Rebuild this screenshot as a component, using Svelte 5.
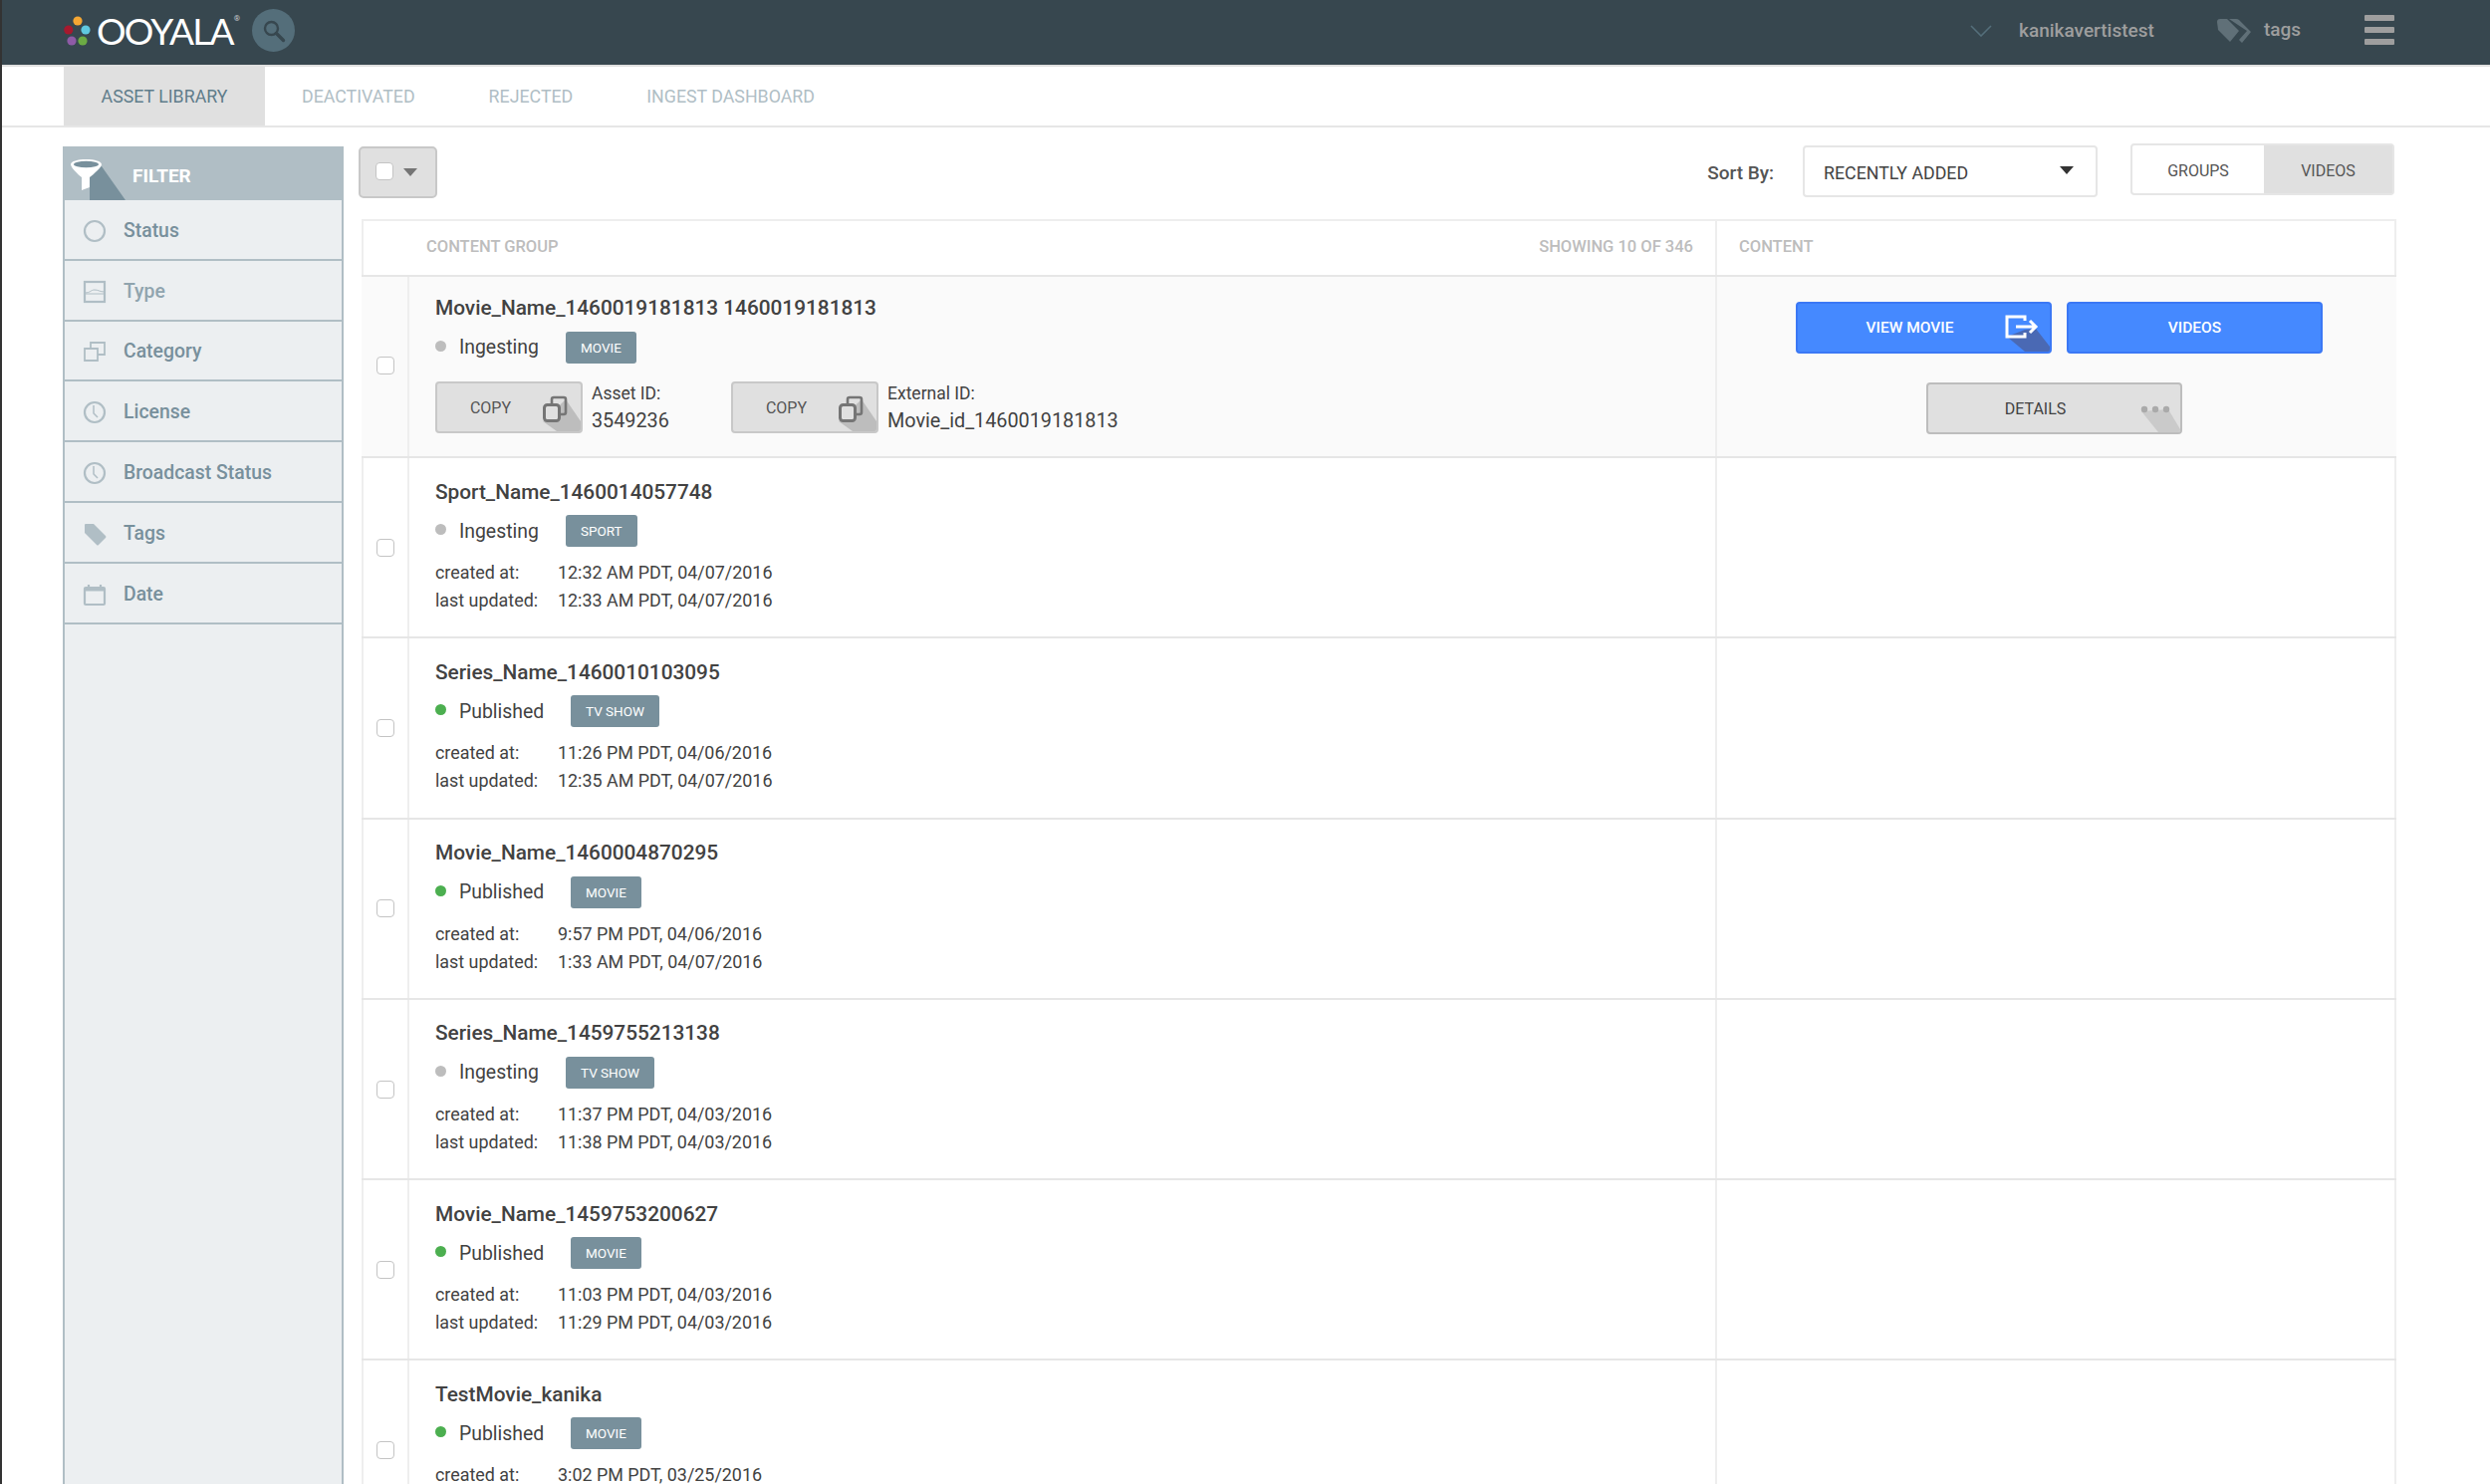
<script>
  const filters = [
    { label: 'Status', icon: 'status' },
    { label: 'Type', icon: 'type' },
    { label: 'Category', icon: 'category' },
    { label: 'License', icon: 'clock' },
    { label: 'Broadcast Status', icon: 'clock' },
    { label: 'Tags', icon: 'tag' },
    { label: 'Date', icon: 'date' }
  ];
  const rows = [
    { name: 'Sport_Name_1460014057748', status: 'Ingesting', type: 'SPORT', created: '12:32 AM PDT, 04/07/2016', updated: '12:33 AM PDT, 04/07/2016' },
    { name: 'Series_Name_1460010103095', status: 'Published', type: 'TV SHOW', created: '11:26 PM PDT, 04/06/2016', updated: '12:35 AM PDT, 04/07/2016' },
    { name: 'Movie_Name_1460004870295', status: 'Published', type: 'MOVIE', created: '9:57 PM PDT, 04/06/2016', updated: '1:33 AM PDT, 04/07/2016' },
    { name: 'Series_Name_1459755213138', status: 'Ingesting', type: 'TV SHOW', created: '11:37 PM PDT, 04/03/2016', updated: '11:38 PM PDT, 04/03/2016' },
    { name: 'Movie_Name_1459753200627', status: 'Published', type: 'MOVIE', created: '11:03 PM PDT, 04/03/2016', updated: '11:29 PM PDT, 04/03/2016' },
    { name: 'TestMovie_kanika', status: 'Published', type: 'MOVIE', created: '3:02 PM PDT, 03/25/2016', updated: '' }
  ];
  const tabs = ['DEACTIVATED', 'REJECTED', 'INGEST DASHBOARD'];
</script>

{#snippet copyBtn()}
  <button class="copy"><span>COPY</span>
    <svg class="ls" width="60" height="52" viewBox="0 0 60 52">
      <path d="M45 20L60 42V52H36L22 42z" fill="#bdbdbd" />
      <rect x="23.500" y="25.500" width="15" height="16" rx="3" fill="#e0e0e0" stroke="#757575" stroke-width="3" />
      <path d="M31 24v-4q0-2 2-2h10q2 0 2 2v13q0 2-2 2h-4" fill="none" stroke="#757575" stroke-width="2.600" />
    </svg>
  </button>
{/snippet}

<div class="page">
  <header class="top">
    <div class="logo">
      <svg class="dots" width="30" height="32" viewBox="0 0 30 32">
        <circle cx="14" cy="6" r="4.600" fill="#f5a733" />
        <circle cx="4.800" cy="15" r="4.600" fill="#a6192e" />
        <circle cx="22" cy="15" r="4.600" fill="#5fc8e0" />
        <circle cx="8" cy="26" r="4.600" fill="#8e5ba6" />
        <circle cx="19" cy="26" r="4.600" fill="#6cab44" />
      </svg>
      <span class="brand">OOYALA</span>
      <sup class="reg">®</sup>
    </div>
    <div class="search">
      <svg width="26" height="26" viewBox="0 0 26 26" fill="none" stroke="#37474f" stroke-width="2.400">
        <circle cx="10.500" cy="10.500" r="6.500" />
        <path d="M15.500 15.500l7 7" stroke-width="3.400" stroke-linecap="round" />
      </svg>
    </div>
    <div class="spacer"></div>
    <svg class="chev" width="22" height="12" viewBox="0 0 22 12" fill="none" stroke="#546e7a" stroke-width="1.600"><path d="M1 1l10 10L21 1" /></svg>
    <span class="user">kanikavertistest</span>
    <svg class="tags" width="36" height="26" viewBox="0 0 36 26" fill="#607078">
      <path d="M1 4Q1 1 4 1h7l12 12-9 11L2 12z" />
      <path d="M13 1h7q2 0 3 1l12 12-9 11-3-3 8-9z" />
    </svg>
    <span class="taglabel">tags</span>
    <div class="burger"><i></i><i></i><i></i></div>
  </header>

  <nav class="tabs">
    <div class="tab active">ASSET LIBRARY</div>
    {#each tabs as t}
      <div class="tab">{t}</div>
    {/each}
  </nav>

  <div class="body">
    <aside class="side">
      <div class="side-head">
        <svg class="funnel" width="66" height="54" viewBox="0 0 66 54">
          <path d="M39 20L63 54H27V40L20 30z" fill="#78909c" />
          <path d="M8 18c0-3 7-5 15.500-5S39 15 39 18c0 3-8 10-12 13v10l-8 3V31C15 28 8 21 8 18z" fill="#fff" />
          <ellipse cx="23.500" cy="18" rx="12.500" ry="3.200" fill="#78909c" />
        </svg>
        <span>FILTER</span>
      </div>
      {#each filters as f}
        <div class="side-row" class:light={f.label === 'Type'}>
          <svg width="24" height="24" viewBox="0 0 24 24" fill="none" stroke="#b0bec5" stroke-width="2.200">
            {#if f.icon === 'status'}
              <circle cx="12" cy="12" r="10" />
            {:else if f.icon === 'type'}
              <rect x="2" y="2" width="20" height="20" />
              <path d="M2 13c6 0 6-3 10-3s5 2 10 2M2 14h20" stroke-width="1" />
            {:else if f.icon === 'category'}
              <path d="M2 9h13v12H2zM8 9V3h14v12h-7" stroke-width="1.800" />
            {:else if f.icon === 'clock'}
              <circle cx="12" cy="12" r="10" />
              <path d="M11 5v8l4 4" stroke-width="1.500" />
            {:else if f.icon === 'tag'}
              <path d="M2 3q0-1 1-1h8l12 12q1 1 0 2l-7 7q-1 1-2 0L2 11z" fill="#b0bec5" stroke="none" />
            {:else}
              <rect x="2" y="5" width="20" height="17" rx="1" />
              <path d="M2 7h20" stroke-width="3" />
              <path d="M6 2v3M18 2v3" />
            {/if}
          </svg>
          <span>{f.label}</span>
        </div>
      {/each}
    </aside>

    <main class="main">
      <div class="toolbar">
        <div class="selall"><span class="cb inner"></span><span class="tri small"></span></div>
        <div class="spacer"></div>
        <span class="sortlabel">Sort By:</span>
        <div class="sortsel"><span>RECENTLY ADDED</span><span class="tri dark"></span></div>
        <div class="seg"><div class="segitem">GROUPS</div><div class="segitem on">VIDEOS</div></div>
      </div>

      <section class="table">
        <div class="thead">
          <div class="th-a"><span>CONTENT GROUP</span><span>SHOWING 10 OF 346</span></div>
          <div class="th-b">CONTENT</div>
        </div>

        <div class="row first">
          <div class="c-check"><span class="cb"></span></div>
          <div class="c-main">
            <div class="title">Movie_Name_1460019181813 1460019181813</div>
            <div class="statusline"><i class="dot ingest"></i><span class="st narrow">Ingesting</span><span class="badge">MOVIE</span></div>
            <div class="ids">
              {@render copyBtn()}
              <div class="idtext w1"><div class="idl">Asset ID:</div><div class="idv">3549236</div></div>
              {@render copyBtn()}
              <div class="idtext"><div class="idl">External ID:</div><div class="idv">Movie_id_1460019181813</div></div>
            </div>
          </div>
          <div class="c-content">
            <div class="btnrow">
              <button class="act blue"><span>VIEW MOVIE</span>
                <svg class="ls" width="70" height="52" viewBox="0 0 70 52">
                  <path d="M27 37L45 52H70V47L56 29 45 30z" fill="#4a69b4" />
                  <path d="M45 21V17H27V37H45V33" fill="none" stroke="#fff" stroke-width="3" />
                  <path d="M36 27H56M50 21l6 6-6 6" fill="none" stroke="#fff" stroke-width="3" />
                </svg>
              </button>
              <button class="act blue plain">VIDEOS</button>
            </div>
            <button class="act detail"><span>DETAILS</span>
              <svg class="ls" width="60" height="52" viewBox="0 0 60 52">
                <path d="M21 31L38 52H60V49L48 29z" fill="#cacaca" />
                <circle cx="24" cy="29" r="3.200" fill="#aaa" />
                <circle cx="35" cy="29" r="3.200" fill="#aaa" />
                <circle cx="46" cy="29" r="3.200" fill="#aaa" />
              </svg>
            </button>
          </div>
        </div>

        {#each rows as r}
          <div class="row">
            <div class="c-check"><span class="cb"></span></div>
            <div class="c-main">
              <div class="title">{r.name}</div>
              <div class="statusline">
                <i class="dot" class:ingest={r.status === 'Ingesting'} class:pub={r.status === 'Published'}></i>
                <span class="st" class:narrow={r.status === 'Ingesting'}>{r.status}</span>
                <span class="badge">{r.type}</span>
              </div>
              <div class="meta"><span>created at:</span><span>{r.created}</span></div>
              {#if r.updated}
                <div class="meta"><span>last updated:</span><span>{r.updated}</span></div>
              {/if}
            </div>
            <div class="c-content"></div>
          </div>
        {/each}
      </section>
    </main>
  </div>
</div>

<style>
  :global(body) { margin: 0; background: #fff; }
  .page {
    width: 2500px; height: 1490px; overflow: hidden; position: relative;
    font-family: Roboto, "Liberation Sans", sans-serif; color: #424242;
    display: flex; flex-direction: column; box-sizing: border-box; border-left: 2px solid #333;
  }
  .top {
    height: 61px; padding-bottom: 4px; flex: none; background: #37474f; display: flex; align-items: center;
    border-bottom: 2px solid #e0e0e0; box-sizing: content-box;
  }
  .logo { display: flex; align-items: center; margin-left: 62px; width: 183px; height: 61px; }
  .dots { flex: none; }
  .brand { font-family: Lato, Roboto, sans-serif; color: #fff; font-size: 37px; font-weight: 400; letter-spacing: -1.800px; margin-left: 3px; }
  .reg { color: #ccc; font-size: 8px; align-self: flex-start; margin: 14px 0 0 1px; }
  .search { width: 43px; height: 43px; border-radius: 50%; background: #546e7a; display: flex; align-items: center; justify-content: center; margin-left: 6px; }
  .spacer { flex: 1; }
  .chev { margin-right: 27px; }
  .user { color: #9e9e9e; font-size: 19px; font-weight: 500; width: 198px; }
  .tags { margin-right: 12px; }
  .taglabel { color: #9e9e9e; font-size: 19px; font-weight: 500; width: 101px; margin-top: -2px; }
  .burger { display: flex; flex-direction: column; gap: 6px; width: 30px; margin-right: 96px; margin-top: -2px; }
  .burger i { height: 6px; background: #9e9e9e; border-radius: 1px; display: block; }

  .tabs { height: 59px; flex: none; display: flex; padding-left: 62px; border-bottom: 2px solid #e6e6e6; }
  .tab { color: #b0bec5; font-size: 17.800px; font-weight: 400; display: flex; align-items: center; margin-right: 74px; }
  .tab.active { background: #e0e0e0; color: #607d8b; width: 202px; justify-content: center; margin-right: 37px; }

  .body { flex: 1; display: flex; align-items: stretch; padding: 19px 0 0 61px; min-height: 0; }
  .side { width: 282px; flex: none; box-sizing: border-box; background: #eceff1; border: solid #b0bec5; border-width: 0 2px; }
  .side-head { height: 54px; margin: 0 -2px; background: #b0bec5; color: #fff; font-weight: 700; font-size: 19px; display: flex; align-items: center; position: relative; overflow: hidden; }
  .side-head span { margin-left: 70px; margin-top: 5px; }
  .funnel { position: absolute; left: 0; top: 0; }
  .side-row { height: 60.800px; box-sizing: border-box; border-bottom: 2px solid #b0bec5; display: flex; align-items: center; padding-left: 18px; gap: 17px; color: #78909c; font-size: 19.400px; font-weight: 500; }
  .side-row span { margin-top: 2px; }
  .side-row svg { margin-top: 3px; }
  .side-row.light { color: #90a4ae; }

  .main { flex: 1; min-width: 0; padding-left: 15px; padding-right: 95px; }
  .toolbar { height: 54px; display: flex; align-items: flex-start; margin-right: 1px; }
  .selall { width: 79px; height: 52px; box-sizing: border-box; background: #e0e0e0; border: 2px solid #c8c8c8; border-radius: 5px; display: flex; align-items: center; padding-left: 15px; gap: 10px; }
  .cb { display: block; width: 18px; height: 18px; box-sizing: border-box; border: 1.500px solid #c4c4c4; border-radius: 4px; background: #fff; }
  .cb.inner { margin-bottom: 2px; }
  .first .cb { margin-bottom: 3px; }
  .tri { display: block; width: 0; height: 0; border-left: 7px solid transparent; border-right: 7px solid transparent; border-top: 8px solid #757575; }
  .tri.small { margin-bottom: 1px; }
  .tri.dark { border-top-color: #333; margin-bottom: 4px; }
  .sortlabel { font-size: 19px; font-weight: 500; color: #555; margin-top: 15px; margin-right: 29px; }
  .sortsel { width: 296px; height: 52px; box-sizing: border-box; border: 2px solid #e6e6e6; border-radius: 4px; display: flex; align-items: center; justify-content: space-between; padding: 2px 22px 0 19px; font-size: 17.800px; color: #424242; margin-right: 33px; margin-top: -1px; }
  .seg { display: flex; width: 265px; height: 52px; box-sizing: border-box; border: 2px solid #e6e6e6; border-radius: 4px; font-size: 16px; color: #555; margin-top: -3px; }
  .segitem { display: flex; align-items: center; justify-content: center; width: 134px; padding-top: 2px; }
  .segitem.on { background: #e0e0e0; width: 131px; }

  .table { margin: 19px 0 0 3px; width: 2043px; box-sizing: border-box; border: solid #eee; border-width: 2px 2px 0; }
  .thead { height: 56px; box-sizing: border-box; display: flex; border-bottom: 2px solid #e6e6e6; color: #bdbdbd; font-size: 16.500px; font-weight: 500; margin: 0 -2px; padding: 0 2px 4px; }
  .th-a { width: 1359px; box-sizing: border-box; padding: 0 22px 0 63px; display: flex; align-items: center; justify-content: space-between; margin-bottom: -4px; padding-bottom: 4px; border-right: 2px solid #eee; }
  .th-b { flex: 1; display: flex; align-items: center; padding-left: 22px; }

  .row { height: 181.300px; box-sizing: border-box; display: flex; border-bottom: 2px solid #e6e6e6; margin: 0 -2px; padding: 0 2px; }
  .row.first { height: 182px; background: #fafafa; }
  .c-check { width: 46px; flex: none; box-sizing: border-box; border-right: 2px solid #eee; display: flex; align-items: center; justify-content: center; }
  .c-main { width: 1313px; flex: none; box-sizing: border-box; border-right: 2px solid #eee; padding: 20.500px 0 0 26px; }
  .c-content { flex: 1; }
  .first .c-main { padding-top: 18px; }
  .title { font-size: 20.800px; font-weight: 500; line-height: 26px; color: #424242; }
  .statusline { display: flex; align-items: center; height: 32px; margin-top: 10.500px; font-size: 19.400px; color: #424242; }
  .dot { width: 11px; height: 11px; border-radius: 50%; margin-right: 13px; margin-top: -3px; display: block; }
  .dot.ingest { background: #bdbdbd; }
  .dot.pub { background: #4caf50; }
  .st { width: 112px; }
  .st.narrow { width: 107px; }
  .badge { background: #78909c; color: #fff; font-size: 13.500px; border-radius: 3px; padding: 0 15px; height: 32px; display: flex; align-items: center; }
  .meta { display: flex; font-size: 17.900px; line-height: 28px; color: #424242; }
  .statusline + .meta { margin-top: 12px; }
  .meta span:first-child { width: 123px; flex: none; }
  .ids { display: flex; margin-top: 18.500px; align-items: flex-start; }
  .copy { width: 148px; height: 52px; position: relative; overflow: hidden; box-sizing: border-box; background: #e0e0e0; border: 2px solid #c8c8c8; border-radius: 4px; font: 16px Roboto, sans-serif; color: #555; padding: 0 37px 0 0; flex: none; }
  .ls { position: absolute; right: 0; bottom: 0; }
  .copy span, .act span { position: relative; z-index: 1; }
  .idtext { margin-left: 9px; }
  .w1 { width: 140px; }
  .idl { font-size: 17.500px; line-height: 24px; margin-top: 0; }
  .idv { font-size: 19.800px; line-height: 26px; margin-top: 3px; }
  .btnrow { display: flex; justify-content: center; gap: 15px; margin-top: 24.500px; padding-left: 7px; }
  .act { width: 257px; height: 52px; box-sizing: border-box; border-radius: 4px; font: 500 15.500px Roboto, sans-serif; position: relative; overflow: hidden; padding: 0 28px 0 0; }
  .act.plain { padding: 0; }
  .blue { background: #4589ff; border: 2px solid #3b78f5; color: #fff; }
  .detail { background: #e0e0e0; border: 2px solid #bdbdbd; color: #424242; display: block; margin: 29.500px 0 0 210px; font-weight: 400; font-size: 16px; padding-right: 38px; }
</style>
